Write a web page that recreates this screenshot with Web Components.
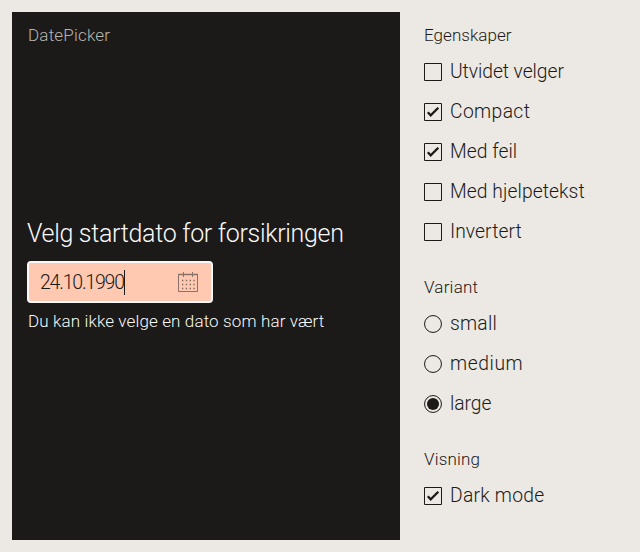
<!DOCTYPE html>
<html lang="no"><head><meta charset="utf-8"><title>DatePicker</title>
<style>
html,body{margin:0;height:100%}
body{background:#ece8e3;color:#1b1a18;font:300 19.3px Roboto,"Liberation Sans",sans-serif;overflow:hidden}
</style></head><body>
<example-layout>
  <preview-panel heading="DatePicker">
    <date-field label="Velg startdato for forsikringen" value="24.10.1990" error="Du kan ikke velge en dato som har vært"></date-field>
  </preview-panel>
  <option-group slot="options" heading="Egenskaper" style="--head-spacing:.05px">
    <option-item style="--spacing:-.06px">Utvidet velger</option-item>
    <option-item checked style="--spacing:.38px">Compact</option-item>
    <option-item checked style="--spacing:.03px">Med feil</option-item>
    <option-item style="--spacing:.07px">Med hjelpetekst</option-item>
    <option-item style="--spacing:.06px">Invertert</option-item>
  </option-group>
  <option-group slot="options" heading="Variant" style="--head-spacing:.22px">
    <option-item radio style="--spacing:.23px">small</option-item>
    <option-item radio style="--spacing:.57px">medium</option-item>
    <option-item radio checked style="--spacing:-.05px">large</option-item>
  </option-group>
  <option-group slot="options" heading="Visning" style="--head-spacing:.18px">
    <option-item checked style="--spacing:.25px">Dark mode</option-item>
  </option-group>
</example-layout>
<script>
class Base extends HTMLElement{
  connectedCallback(){ if(!this.shadowRoot) this.attachShadow({mode:'open'}).innerHTML=this.render(); }
}
customElements.define('example-layout',class extends Base{render(){return `
<style>:host{display:grid;grid-template-columns:388px 1fr;gap:24px;box-sizing:border-box;height:552px;padding:12px}
aside{display:flex;flex-direction:column;gap:24px;padding-top:12px}</style>
<slot></slot><aside><slot name="options"></slot></aside>`}});
customElements.define('preview-panel',class extends Base{render(){return `
<style>:host{display:flex;flex-direction:column;box-sizing:border-box;background:#1b1a18;color:#f9f9f9;padding:12px 16px}
header{font-size:17px;line-height:22px;padding-bottom:2px;letter-spacing:.2px;color:#b8b6b3}
main{flex:1;display:flex;flex-direction:column;justify-content:center;padding-bottom:25px}</style>
<header>${this.getAttribute('heading')}</header><main><slot></slot></main>`}});
customElements.define('date-field',class extends Base{render(){return `
<style>:host{display:flex;flex-direction:column;align-items:flex-start}
label{font-size:25px;line-height:34px;letter-spacing:-.31px;margin:0 0 10px -1px;white-space:nowrap}
.box{box-sizing:border-box;width:186px;height:42px;margin-left:-1px;border:2px solid #f9f9f9;border-radius:4px;background:#ffc8b1;color:#1b1a18;display:flex;align-items:center;padding:0 13px 0 11px}
.val{font-size:19.5px;line-height:24px;padding-top:2px;letter-spacing:-1.21px}
.caret{width:1px;height:25px;background:#1b1a18;margin-left:.3px}
svg{margin-left:auto;display:block}
.err{font-size:17px;line-height:22px;padding-bottom:2px;letter-spacing:.13px;margin-top:7px;white-space:nowrap}</style>
<label>${this.getAttribute('label')}</label>
<div class="box"><span class="val">${this.getAttribute('value')}</span><span class="caret"></span>
<svg width="20" height="22" viewBox="0 0 20 22" fill="none" stroke="#8b716a"><path d="M.5 3v17.500h19V3M5.500 1v5M14.500 1v5"/><path d="M0 3.500h20" stroke-width="1.500"/><path d="M4 9.500h13M4 13.500h13M4 17.500h13" stroke="#7c655d" stroke-width="1.300" stroke-dasharray="1.300 2.500"/></svg></div>
<div class="err">${this.getAttribute('error')}</div>`}});
customElements.define('option-group',class extends Base{render(){return `
<style>:host{display:flex;flex-direction:column}
header{font-size:17px;line-height:22px;margin-bottom:6px;letter-spacing:var(--head-spacing)}</style>
<header>${this.getAttribute('heading')}</header><slot></slot>`}});
customElements.define('option-item',class extends Base{render(){
const r=this.hasAttribute('radio'),c=this.hasAttribute('checked');
return `
<style>:host{display:flex;align-items:center;height:40px;gap:8px}
svg{display:block}
span{line-height:24px;padding-bottom:1px;letter-spacing:var(--spacing);white-space:nowrap}</style>
<svg width="18" height="18" viewBox="0 0 18 18" fill="none" stroke="#1b1a18">${r
?`<circle cx="9" cy="9" r="8.450"/>${c?'<circle cx="9" cy="9" r="6" fill="#1b1a18" stroke="none"/>':''}`
:`<path d="M.5.5h17v17H.5z"/>${c?'<path d="M3.800 9.300l2.900 3L14.300 4.800" stroke-width="2.300"/>':''}`}</svg><span><slot></slot></span>`}});
</script></body></html>
